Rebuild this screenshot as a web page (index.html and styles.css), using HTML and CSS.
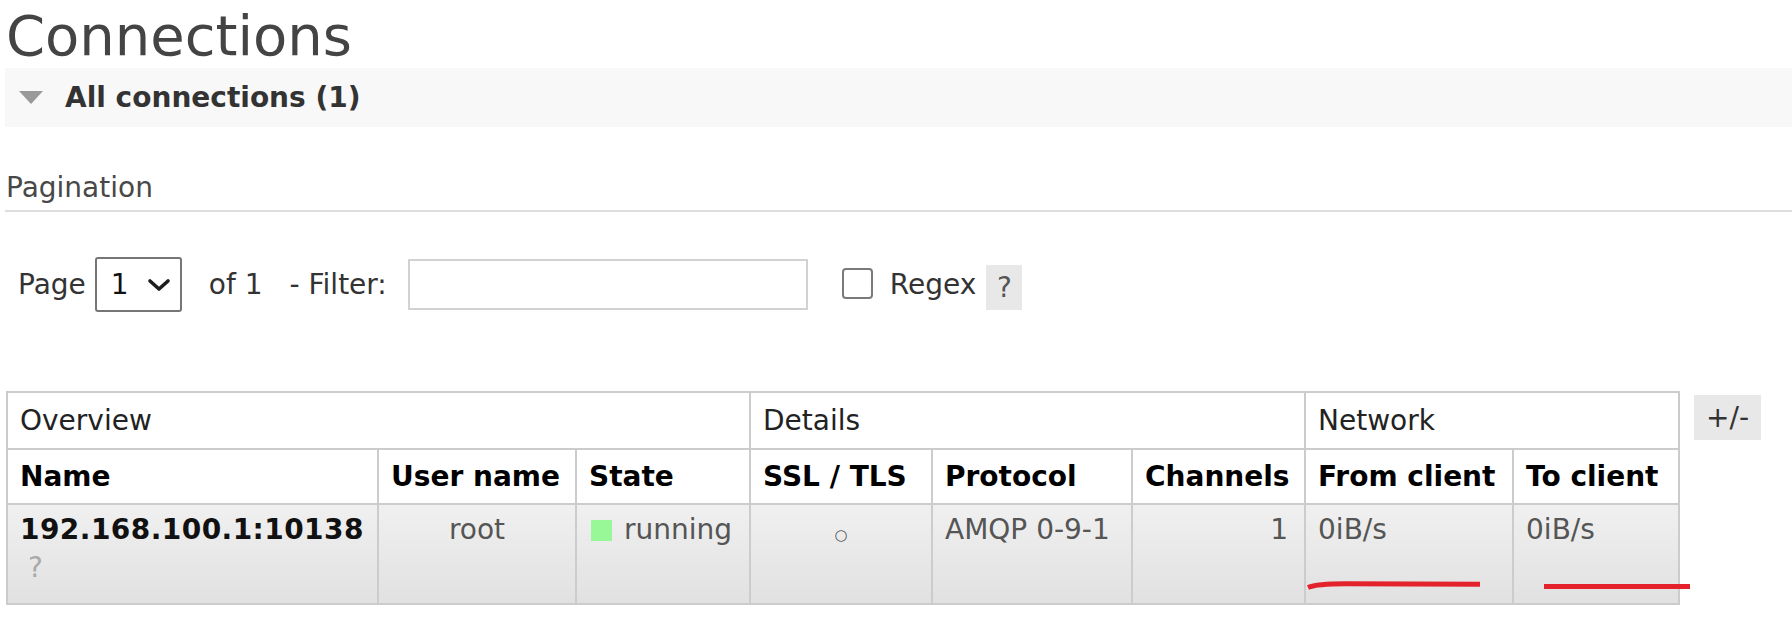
FILE: index.html
```html
<!DOCTYPE html>
<html lang="en">
<head>
<meta charset="utf-8">
<title>Connections</title>
<link rel="stylesheet" href="styles.css">
</head>
<body>
<h1 class="page-title">Connections</h1>
<div class="section">
  <h2 class="section-head">All connections (1)</h2>
  <div class="hider">
    <h3 class="pagination-title">Pagination</h3>
    <div class="pager">
      <span class="pager-label">Page</span>
      <div class="pager-select">
        <span class="pager-select-value">1</span>
        <svg class="chevron" width="24" height="14" viewBox="0 0 24 14"><polyline points="3,3 12,11 21,3" fill="none" stroke="#1e1e1e" stroke-width="3.6" stroke-linecap="round" stroke-linejoin="round"/></svg>
      </div>
      <span class="pager-of">of 1</span>
      <span class="pager-filter-label">- Filter:</span>
      <input class="pager-filter" type="text">
      <input class="pager-checkbox" type="checkbox">
      <label class="pager-regex">Regex</label>
      <span class="help-box">?</span>
    </div>

    <div class="table-wrap">
      <table class="list">
        <colgroup>
          <col class="c-name">
          <col class="c-user">
          <col class="c-state">
          <col class="c-ssl">
          <col class="c-proto">
          <col class="c-chan">
          <col class="c-from">
          <col class="c-to">
        </colgroup>
        <thead>
          <tr class="group-row">
            <th colspan="3">Overview</th>
            <th colspan="3">Details</th>
            <th colspan="2">Network</th>
          </tr>
          <tr class="head-row">
            <th>Name</th>
            <th>User name</th>
            <th>State</th>
            <th>SSL / TLS</th>
            <th>Protocol</th>
            <th>Channels</th>
            <th>From client</th>
            <th>To client</th>
          </tr>
        </thead>
        <tbody>
          <tr class="alt1">
            <td><span class="conn-name">192.168.100.1:10138</span><span class="conn-sub">?</span></td>
            <td class="c">root</td>
            <td><span class="status-green"></span>running</td>
            <td class="c"><span class="bool">○</span></td>
            <td>AMQP 0-9-1</td>
            <td class="r">1</td>
            <td>0iB/s</td>
            <td>0iB/s</td>
          </tr>
        </tbody>
      </table>
      <span class="plus-minus">+/-</span>
    </div>
  </div>
</div>

<svg class="marks" width="1792" height="624" viewBox="0 0 1792 624">
  <path d="M1308 587.5 C1314 585, 1326 583.8, 1345 583.8 L1480 584.2" fill="none" stroke="#e4222b" stroke-width="5"/>
  <path d="M1544 586.6 L1690 586.6" fill="none" stroke="#e4222b" stroke-width="5"/>
</svg>
</body>
</html>
```

FILE: styles.css
```css
html, body {
  margin: 0;
  background: #fff;
}

body {
  position: relative;
  padding: 0 0 0 5px;
  font-family: "DejaVu Sans", Verdana, sans-serif;
  font-size: 28px;
  color: #484848;
  overflow: hidden;
}

.page-title {
  margin: 0;
  padding: 6px 0 0 1px;
  font-size: 56px;
  font-weight: normal;
  line-height: 60px;
  color: #444;
}

.section {
  margin-top: 2px;
}

.section-head {
  display: flex;
  align-items: center;
  margin: 0;
  padding: 13px 12px 13px 14px;
  background: #f8f8f8;
  font-size: 28px;
  font-weight: bold;
  line-height: 33px;
  color: #333;
}

.section-head::before {
  content: "";
  width: 0;
  height: 0;
  margin-right: 22px;
  border-left: 12px solid transparent;
  border-right: 12px solid transparent;
  border-top: 13px solid #999;
}

.pagination-title {
  margin: 44px 0 0 0;
  padding: 0 0 6px 1px;
  border-bottom: 2px solid #ddd;
  font-size: 28px;
  font-weight: normal;
  line-height: 33px;
  color: #484848;
}

.pager {
  display: flex;
  align-items: center;
  margin-top: 45px;
  padding-left: 13px;
  height: 55px;
  line-height: 33px;
  color: #333;
}

.pager-select {
  display: flex;
  align-items: center;
  box-sizing: border-box;
  width: 87px;
  height: 55px;
  margin-left: 9px;
  padding: 0 9px 0 14px;
  border: 2px solid #767676;
  border-radius: 3px;
  color: #111;
}

.chevron {
  margin-left: auto;
}

.pager-of {
  margin-left: 27px;
}

.pager-filter-label {
  margin-left: 27px;
}

.pager-filter {
  box-sizing: border-box;
  width: 400px;
  height: 51px;
  margin: 0 0 0 21px;
  border: 2px solid #d2d2d2;
  border-radius: 0;
  background: #fff;
  outline: none;
}

.pager-checkbox {
  appearance: none;
  -webkit-appearance: none;
  box-sizing: border-box;
  width: 31px;
  height: 31px;
  margin: 0 0 2px 34px;
  border: 2px solid #7a7a7a;
  border-radius: 4px;
  background: #fff;
}

.pager-regex {
  margin-left: 17px;
}

.help-box {
  box-sizing: border-box;
  width: 36px;
  height: 45px;
  margin: 5px 0 0 10px;
  padding-top: 6px;
  background: #e8e8e8;
  text-align: center;
  color: #555;
}

.table-wrap {
  display: flex;
  align-items: flex-start;
  margin-top: 79px;
  padding-left: 1px;
}

table.list {
  width: 1674px;
  border-collapse: collapse;
  table-layout: fixed;
  border: 2px solid #ccc;
}

.c-name { width: 371px; }
.c-user { width: 198px; }
.c-state { width: 174px; }
.c-ssl { width: 182px; }
.c-proto { width: 200px; }
.c-chan { width: 173px; }
.c-from { width: 208px; }
.c-to { width: 166px; }

table.list th,
table.list td {
  border: 2px solid #ccc;
  text-align: left;
  vertical-align: top;
  line-height: 33px;
  white-space: nowrap;
  overflow: hidden;
}

.group-row th {
  padding: 11px 12px;
  font-weight: normal;
  color: #222;
  background: #fff;
}

.head-row th {
  padding: 10px 12px;
  font-weight: bold;
  color: #000;
  background: #fff;
}

table.list td {
  padding: 8px 12px 19px 12px;
  color: #555;
  background: linear-gradient(to bottom, #f0f0f0 0%, #e1e1e1 100%);
}

table.list td.c {
  text-align: center;
}

table.list td.r {
  text-align: right;
  padding-right: 16px;
}

.conn-name {
  display: block;
  font-weight: bold;
  letter-spacing: 0.45px;
  color: #111;
}

.conn-sub {
  display: block;
  margin: 5px 0 0 8px;
  color: #aaa;
}

.status-green {
  display: inline-block;
  width: 21px;
  height: 21px;
  margin: 0 12px 0 2px;
  vertical-align: -2px;
  background: #98f898;
}

.bool {
  font-size: 15px;
  font-weight: bold;
  color: #555;
  vertical-align: -1px;
}

.plus-minus {
  box-sizing: border-box;
  height: 45px;
  margin: 4px 0 0 14px;
  padding: 6px 12px;
  background: #e8e8e8;
  line-height: 33px;
  color: #333;
}

.marks {
  position: absolute;
  top: 0;
  left: 0;
  pointer-events: none;
}
```
